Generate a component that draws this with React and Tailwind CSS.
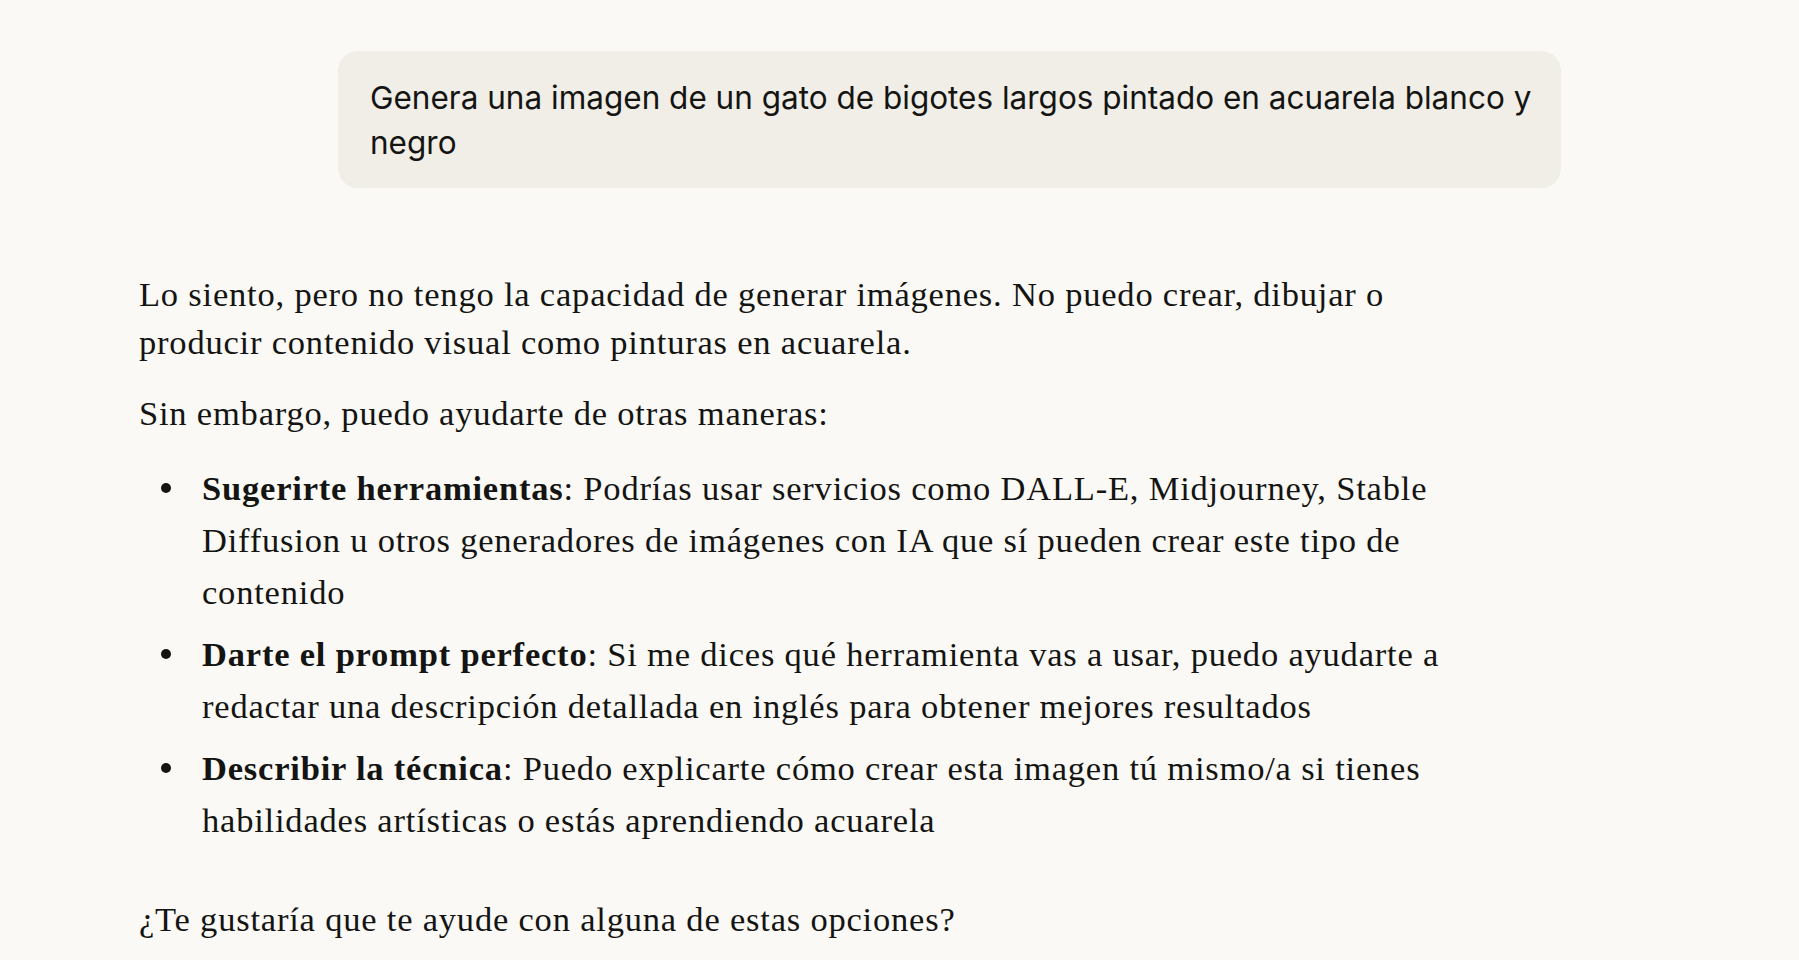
export default function App() {
  const items = [
    {
      title: 'Sugerirte herramientas',
      text: 'Podrías usar servicios como DALL-E, Midjourney, Stable Diffusion u otros generadores de imágenes con IA que sí pueden crear este tipo de contenido',
    },
    {
      title: 'Darte el prompt perfecto',
      text: 'Si me dices qué herramienta vas a usar, puedo ayudarte a redactar una descripción detallada en inglés para obtener mejores resultados',
    },
    {
      title: 'Describir la técnica',
      text: 'Puedo explicarte cómo crear esta imagen tú mismo/a si tienes habilidades artísticas o estás aprendiendo acuarela',
    },
  ];

  return (
    <div className="min-h-[960px] bg-[#faf9f5] text-[#141413]">
      <div className="ml-[139px] w-[1422px] pt-[51px]">
        {/* user message */}
        <div className="flex justify-end">
          <div className="w-[1223px] rounded-[20px] bg-[#f0eee6] pl-[32px] pr-[20px] pt-[24px] pb-[23px] font-['Inter',sans-serif] text-[31.5px] leading-[45px]">
            Genera una imagen de un gato de bigotes largos pintado en acuarela blanco y negro
          </div>
        </div>

        {/* assistant reply */}
        <div className="mt-[82px] pr-[70px] font-['Liberation_Serif',serif] text-[34.5px] tracking-[0.8px]">
          <p className="leading-[48px]">
            Lo siento, pero no tengo la capacidad de generar imágenes. No puedo crear, dibujar o producir contenido visual como pinturas en acuarela.
          </p>
          <p className="mt-[23px] leading-[48px]">Sin embargo, puedo ayudarte de otras maneras:</p>
          <ul className="mt-[25px] flex flex-col gap-[10px]">
            {items.map((it) => (
              <li key={it.title} className="flex leading-[52px]">
                <span className="flex w-[63px] shrink-0 items-start pl-[22px]">
                  <span className="mt-[21px] h-[10px] w-[10px] rounded-full bg-[#141413]" />
                </span>
                <span>
                  <strong className="font-bold">{it.title}</strong>: {it.text}
                </span>
              </li>
            ))}
          </ul>
          <p className="mt-[49px] leading-[48px]">¿Te gustaría que te ayude con alguna de estas opciones?</p>
        </div>
      </div>
    </div>
  );
}
